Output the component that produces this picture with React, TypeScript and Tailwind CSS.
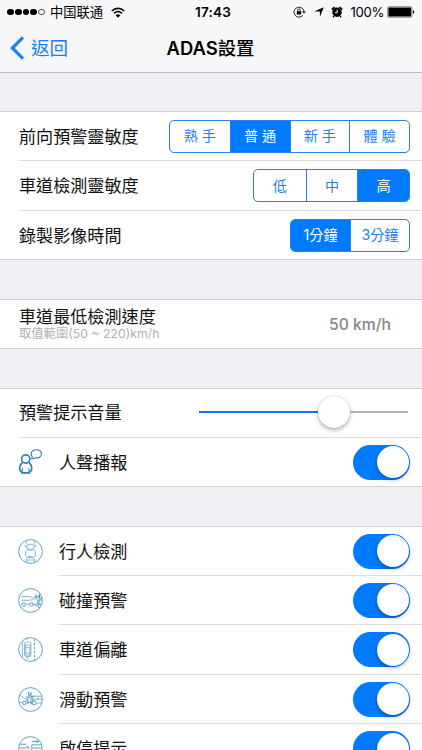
import { useState, type ReactNode } from "react";
import clsx from "clsx";

type ToggleItem = { label: string; icon: ReactNode; height: string };

function StatusBar() {
  return (
    <div className="flex h-6 items-center text-[13.3px] leading-6 text-black">
      <div className="flex w-[190px] items-center pl-[7px]">
        <div className="flex gap-[1px]">
          {[0, 1, 2, 3].map((i) => (
            <span key={i} className="size-[6.8px] rounded-full bg-black" />
          ))}
          <span className="size-[6.8px] rounded-full border border-neutral-600" />
        </div>
        <span className="ml-[5px] font-['Inter','Noto_Sans_CJK_SC',sans-serif]">中国联通</span>
        <svg className="ml-[8px]" width="14" height="11" viewBox="0 0 14 11" fill="none" stroke="#000">
          <path d="M.8 4C4.4.5 9.6.5 13.2 4" strokeWidth="1.7" />
          <path d="M3 6.3c2.4-2.2 5.6-2.2 8 0" strokeWidth="1.6" />
          <path d="M7 10.8 4.7 8.2c1.4-1.2 3.2-1.2 4.6 0z" fill="#000" stroke="none" />
        </svg>
      </div>
      <span className="w-[46px] text-center text-[13.5px] font-semibold tracking-[0.2px]">17:43</span>
      <div className="flex flex-1 items-center justify-end pr-[7px]">
        <svg width="13" height="12" viewBox="0 0 13 12" fill="none" stroke="#222">
          <path d="M9.8 9.4A5 5 0 1 1 11 6" strokeWidth="1" />
          <path d="m9.1 5.6 1.9 2.2 1.8-2.2z" fill="#222" stroke="none" />
          <rect x="3.8" y="5.2" width="4.4" height="3.3" fill="#000" stroke="none" />
          <path d="M4.7 5.3V4.2a1.3 1.3 0 0 1 2.6 0v1.1" strokeWidth=".9" />
        </svg>
        <svg className="ml-[8px]" width="10" height="10" viewBox="0 0 10 10">
          <path d="M9.8.2 5.9 9.8V4.4H.2z" />
        </svg>
        <svg className="ml-[7px]" width="12" height="12" viewBox="0 0 12 12">
          <circle cx="6" cy="6.3" r="4.7" />
          <path d="M.8 3.6 3.4 1M11.2 3.6 8.6 1" stroke="#000" strokeWidth="1.7" />
          <path d="m3 10-1 1.4M9 10l1 1.4" stroke="#000" strokeWidth="1.4" />
          <path d="M6.2 3.6v3H4" stroke="#fff" strokeWidth="1" fill="none" />
        </svg>
        <span className="ml-[7px] text-[13.2px] tracking-[-0.35px]">100%</span>
        <svg className="ml-[3px]" width="28" height="12" viewBox="0 0 28 12">
          <rect x=".5" y=".7" width="24.6" height="10.6" rx="1.4" fill="none" stroke="#777" strokeWidth=".8" />
          <rect x="1.4" y="1.5" width="22.8" height="9" rx=".5" />
          <path d="M26 4.2c1.6.3 1.6 3.3 0 3.6z" />
        </svg>
      </div>
    </div>
  );
}

function NavBar() {
  return (
    <div className="flex h-12 items-center pl-[10px]">
      <button className="flex w-[100px] items-center text-[18.5px] text-[#157efb]">
        <svg className="mr-[7px]" width="14" height="24" viewBox="0 0 14 24" fill="none" stroke="currentColor" strokeWidth="3.2">
          <path d="M13 1.3 2.4 12 13 22.7" />
        </svg>
        返回
      </button>
      <h1 className="w-[201px] text-center text-[18.4px] font-medium text-black">
        <span className="font-semibold">ADAS</span>設置
      </h1>
    </div>
  );
}

function Segmented({ options, initial, widths }: { options: string[]; initial: number; widths: string }) {
  const [active, setActive] = useState(initial);
  return (
    <div className={clsx("grid h-[33px] overflow-hidden rounded-[5px] border border-[#2c7df0]", widths)}>
      {options.map((option, i) => (
        <button
          key={option}
          onClick={() => setActive(i)}
          className={clsx(
            "text-center text-[14.2px]",
            i > 0 && "border-l border-[#2c7df0]",
            i === active ? "bg-[#007aff] text-white" : "text-[#2580ee]"
          )}
        >
          {option}
        </button>
      ))}
    </div>
  );
}

function Switch() {
  const [on, setOn] = useState(true);
  return (
    <button
      onClick={() => setOn(!on)}
      className={clsx(
        "flex h-[35px] w-[57px] shrink-0 items-center rounded-full px-[1.5px]",
        on ? "justify-end bg-[#007aff]" : "bg-gray-200"
      )}
    >
      <span className="size-8 rounded-full bg-white shadow-[0_2px_4px_rgba(0,0,0,0.3)]" />
    </button>
  );
}

function Row({ children, height = "h-[49px]", last = false }: { children: ReactNode; height?: string; last?: boolean }) {
  return (
    <div className={clsx("pl-[19px]", last && "border-b border-[#d3d3d6]", height)}>
      <div className={clsx("flex h-full items-center justify-between pr-[12px]", !last && "border-b border-[#dedee1]")}>
        {children}
      </div>
    </div>
  );
}

function ToggleRow({ label, icon, height, last = false }: ToggleItem & { last?: boolean }) {
  return (
    <div className={clsx("flex pl-[18px]", height, last && "border-b border-[#d3d3d6]")}>
      <div className="flex w-[41px] items-center pb-px">{icon}</div>
      <div className={clsx("flex flex-1 items-center justify-between pr-[12px]", !last && "border-b border-[#dedee1]")}>
        <span className="pt-px">{label}</span>
        <Switch />
      </div>
    </div>
  );
}

function Section({ children }: { children: ReactNode }) {
  return <section className="mt-[39px] shrink-0 border-t border-[#d3d3d6] bg-white">{children}</section>;
}

function RoundIcon({ children }: { children: ReactNode }) {
  return (
    <svg width="25" height="25" viewBox="0 0 25 25" fill="none" stroke="#4b9bc3" strokeWidth=".7">
      <circle cx="12.5" cy="12.5" r="11.9" strokeWidth=".9" />
      {children}
    </svg>
  );
}

const voiceIcon = (
  <svg width="24" height="26" viewBox="0 0 24 26" fill="none" stroke="#2584b0" strokeWidth="1.6">
    <circle cx="7.7" cy="10" r="4.1" />
    <path d="M4.7 13.5C2.4 15 1.6 17.5 1.7 20.2c0 1.6.9 2 2.2 2v1.7h7.6v-1.7c1.3 0 2.2-.4 2.2-2 .1-2.7-.7-5.2-3-6.7" />
    <path d="M4.4 18.8v3.4M11 18.8v3.4" strokeWidth="1" />
    <path d="M13.6 9.8c.5-.7.7-1.4.6-2.2-2.8-3.2.1-6.8 4-6.8 3.2 0 5.2 1.9 5.2 4.1 0 3.1-3 4.4-6.2 4-1.1.8-2.2 1-3.6.9z" strokeWidth="1.1" />
  </svg>
);

const pedestrianIcon = (
  <RoundIcon>
    <rect x="9" y="5.3" width="7" height="5" rx="1.8" />
    <path d="M8.2 1.8v3M16.8 1.8v3M9 7.2H7.2v-1.5M16 7.2h1.8v-1.5M9.6 10.3l-2 2.2v4.2l2 2h5.8l2-2v-4.2l-2-2" />
    <path d="M9.7 10.4c1.7 1.2 3.9 1.2 5.6 0M9.5 18.6c1.6-1.6 4.4-1.6 6 0M8.2 20v3.5M16.8 20v3.5M8.2 21h8.6" />
  </RoundIcon>
);

const collisionIcon = (
  <RoundIcon>
    <path d="M3.3 8.5h8.2c2.1.5 3.8 2 5.6 2.3l2.4.5v4.8h-2M4 12.3h7.2l4.2-.8M3.2 16.3h1M7.5 16.3h4.2M15 16.3h2.4" />
    <circle cx="5.7" cy="16.5" r="1.7" strokeWidth="1" />
    <circle cx="13.4" cy="16.5" r="1.7" strokeWidth="1" />
    <path d="m16.3 8.4 1.8 1.4-.1-3 1.6 3 2.2-4-.5 5.1 2.5-.7M20.5 12h3.4M19.5 16.3h3.6M21 12v4.3m-1.5.5L21 20M17 17l1.5 1" strokeWidth="1" />
  </RoundIcon>
);

const laneIcon = (
  <RoundIcon>
    <rect x="6.6" y="5" width="6.3" height="14.6" rx="1.7" />
    <path d="M7 8.5c1.8-.9 3.8-.9 5.5 0l-.7 2.2H7.7zM7.7 16.2h4.1l.7 1.7c-1.7.6-3.6.6-5.4 0zM7.8 10.8v5.3M11.8 10.8v5.3M4.4 5v14.8M9.2 2.6v-2M9.2 20v2.6" />
    <path d="M16.4 2v21" strokeWidth=".9" strokeDasharray="2.4 1.5" />
  </RoundIcon>
);

const slideIcon = (
  <RoundIcon>
    <path d="m1.8 8.4 5.3 3 3.8 1.4M1.2 15.6h3.2M8.2 15.6h3M13 9.2h10.7M13.8 9.2l-1.3 3h11.9M12.3 13v2.5h1.5M18.7 16h5M20 12.2V9.3" />
    <circle cx="6.3" cy="15.9" r="1.7" strokeWidth="1" />
    <circle cx="16.2" cy="15.9" r="2" strokeWidth="1" />
    <path d="m10.4 5 1.3 4.6 1.4-4.3-.2 5.4 3.2-2-2 3.8 2.2 1.2-3 .5.5 3.1-2.1-2.2-2.1 1.6.6-2.6-2.5-.6 2.6-1.2-1.9-2.9 2.7 1.4z" strokeWidth=".8" />
  </RoundIcon>
);

const stopGoIcon = (
  <RoundIcon>
    <path d="M1.8 8.2h5.6c1.2 1.7 2.3 2.8 4 3.4M1 12h10.3M13.8 8.8h9.6M13.8 8.8v9M13.8 12h10M14 5.5h6.4m-2-1.2 2.1 1.2-2.1 1.3" strokeWidth=".9" />
    <circle cx="6" cy="17" r="2" />
    <circle cx="18" cy="18" r="2" />
  </RoundIcon>
);

const alerts: ToggleItem[] = [
  { label: "行人檢測", icon: pedestrianIcon, height: "h-[49px]" },
  { label: "碰撞預警", icon: collisionIcon, height: "h-[49px]" },
  { label: "車道偏離", icon: laneIcon, height: "h-[50px]" },
  { label: "滑動預警", icon: slideIcon, height: "h-[49px]" },
  { label: "啟停提示", icon: stopGoIcon, height: "h-[50px]" },
];

export default function App() {
  return (
    <div className="flex h-[750px] w-[422px] flex-col overflow-hidden bg-[#efeff4] font-['Inter','Noto_Sans_CJK_TC',sans-serif] text-[17.1px] leading-[20px] text-[#111]">
      <header className="h-[73px] shrink-0 border-b border-[#bfbfc3] bg-[#f7f7f9]">
        <StatusBar />
        <NavBar />
      </header>

      <div className="-mt-px flex flex-col">
        <Section>
          <Row>
            <span className="pt-[2px]">前向預警靈敏度</span>
            <Segmented options={["熟 手", "普 通", "新 手", "體 驗"]} initial={1} widths="w-[241px] grid-cols-4" />
          </Row>
          <Row height="h-[50px]">
            <span className="pt-px">車道檢測靈敏度</span>
            <Segmented options={["低", "中", "高"]} initial={2} widths="w-[157px] grid-cols-3" />
          </Row>
          <Row last>
            <span className="pt-[2px]">錄製影像時間</span>
            <Segmented options={["1分鐘", "3分鐘"]} initial={0} widths="w-[120px] grid-cols-2" />
          </Row>
        </Section>

        <Section>
          <Row last>
            <div>
              <div>車道最低檢測速度</div>
              <div className="text-[12.3px] leading-[14px] text-[#b0b0b0]">取值範圍(50 ~ 220)km/h</div>
            </div>
            <span className="pr-[19px] pt-px text-[15.7px] font-medium text-[#858585]">50 km/h</span>
          </Row>
        </Section>

        <Section>
          <Row>
            <span>預警提示音量</span>
            <div className="mr-[2px] mb-[2px] flex w-[209px] items-center">
              <div className="h-[2px] w-[119px] bg-[#1670f5]" />
              <div className="size-8 rounded-full bg-white shadow-[0_2px_4px_rgba(0,0,0,0.3),0_0_1px_rgba(0,0,0,0.3)]" />
              <div className="h-[2px] flex-1 bg-[#b3b3b3]" />
            </div>
          </Row>
          <ToggleRow label="人聲播報" icon={voiceIcon} height="h-[49px]" last />
        </Section>

        <Section>
          {alerts.map((item) => (
            <ToggleRow key={item.label} {...item} />
          ))}
        </Section>
      </div>
    </div>
  );
}
